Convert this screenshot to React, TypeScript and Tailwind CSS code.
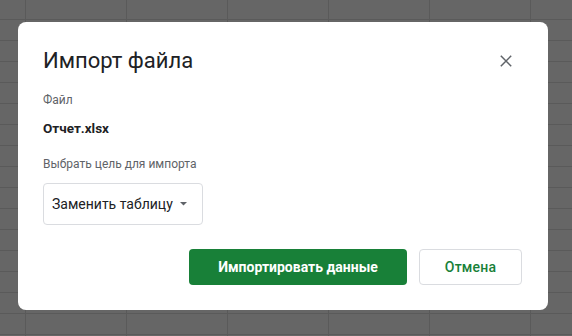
import { FC } from 'react';

const rows = Array.from({ length: 17 });
const cols = Array.from({ length: 7 });

const SheetBackdrop: FC = () => (
  <div className="grid grid-cols-[26px_repeat(6,101px)] grid-rows-[20px_repeat(16,21px)]">
    {rows.map((_, r) =>
      cols.map((_, c) => (
        <div key={`${r}-${c}`} className="border-r border-b border-[#5a5a5a]" />
      ))
    )}
  </div>
);

const CloseIcon: FC = () => (
  <svg width="12" height="12" viewBox="0 0 12 12" fill="none">
    <path d="M0.8 0.8L11.2 11.2M11.2 0.8L0.8 11.2" stroke="#5f6368" strokeWidth="1.5" />
  </svg>
);

const App: FC = () => {
  return (
    <div className="relative w-[572px] h-[336px] overflow-hidden bg-[#666666] font-['Roboto',sans-serif]">
      <SheetBackdrop />

      {/* Import dialog */}
      <div className="absolute left-[18px] top-[22px] w-[530px] h-[288px] bg-white rounded-[8px] pl-[25px] pr-[26px] pt-[25px] flex flex-col">
        <div className="flex items-center justify-between h-[28px]">
          <h1 className="text-[22px] leading-[28px] text-[#202124]">Импорт файла</h1>
          <button className="w-[32px] h-[28px] flex items-center justify-center">
            <CloseIcon />
          </button>
        </div>

        <div className="mt-[17px] text-[12px] leading-[16px] text-[#5f6368]">Файл</div>
        <div className="mt-[10px] text-[13.5px] leading-[20px] font-bold text-[#202124]">Отчет.xlsx</div>

        <div className="mt-[18px] text-[12px] leading-[16px] text-[#5f6368]">Выбрать цель для импорта</div>
        <div className="mt-[11px] w-[160px] h-[42px] border border-[#dadce0] rounded-[4px] flex items-center pl-[8px] pr-[15px] justify-between">
          <span className="text-[14px] leading-[20px] text-[#202124]">Заменить таблицу</span>
          <svg width="7" height="4" viewBox="0 0 7 4">
            <path d="M0 0L7 0L3.5 3.5Z" fill="#5f6368" />
          </svg>
        </div>

        <div className="mt-[24px] flex justify-end gap-[12px]">
          <button className="w-[218px] h-[36px] rounded-[4px] bg-[#188038] text-white text-[14px] font-bold">
            Импортировать данные
          </button>
          <button className="w-[103px] h-[36px] rounded-[4px] border border-[#dadce0] text-[#188038] text-[14px] font-medium tracking-[0.2px]">
            Отмена
          </button>
        </div>
      </div>
    </div>
  );
};

export default App;
